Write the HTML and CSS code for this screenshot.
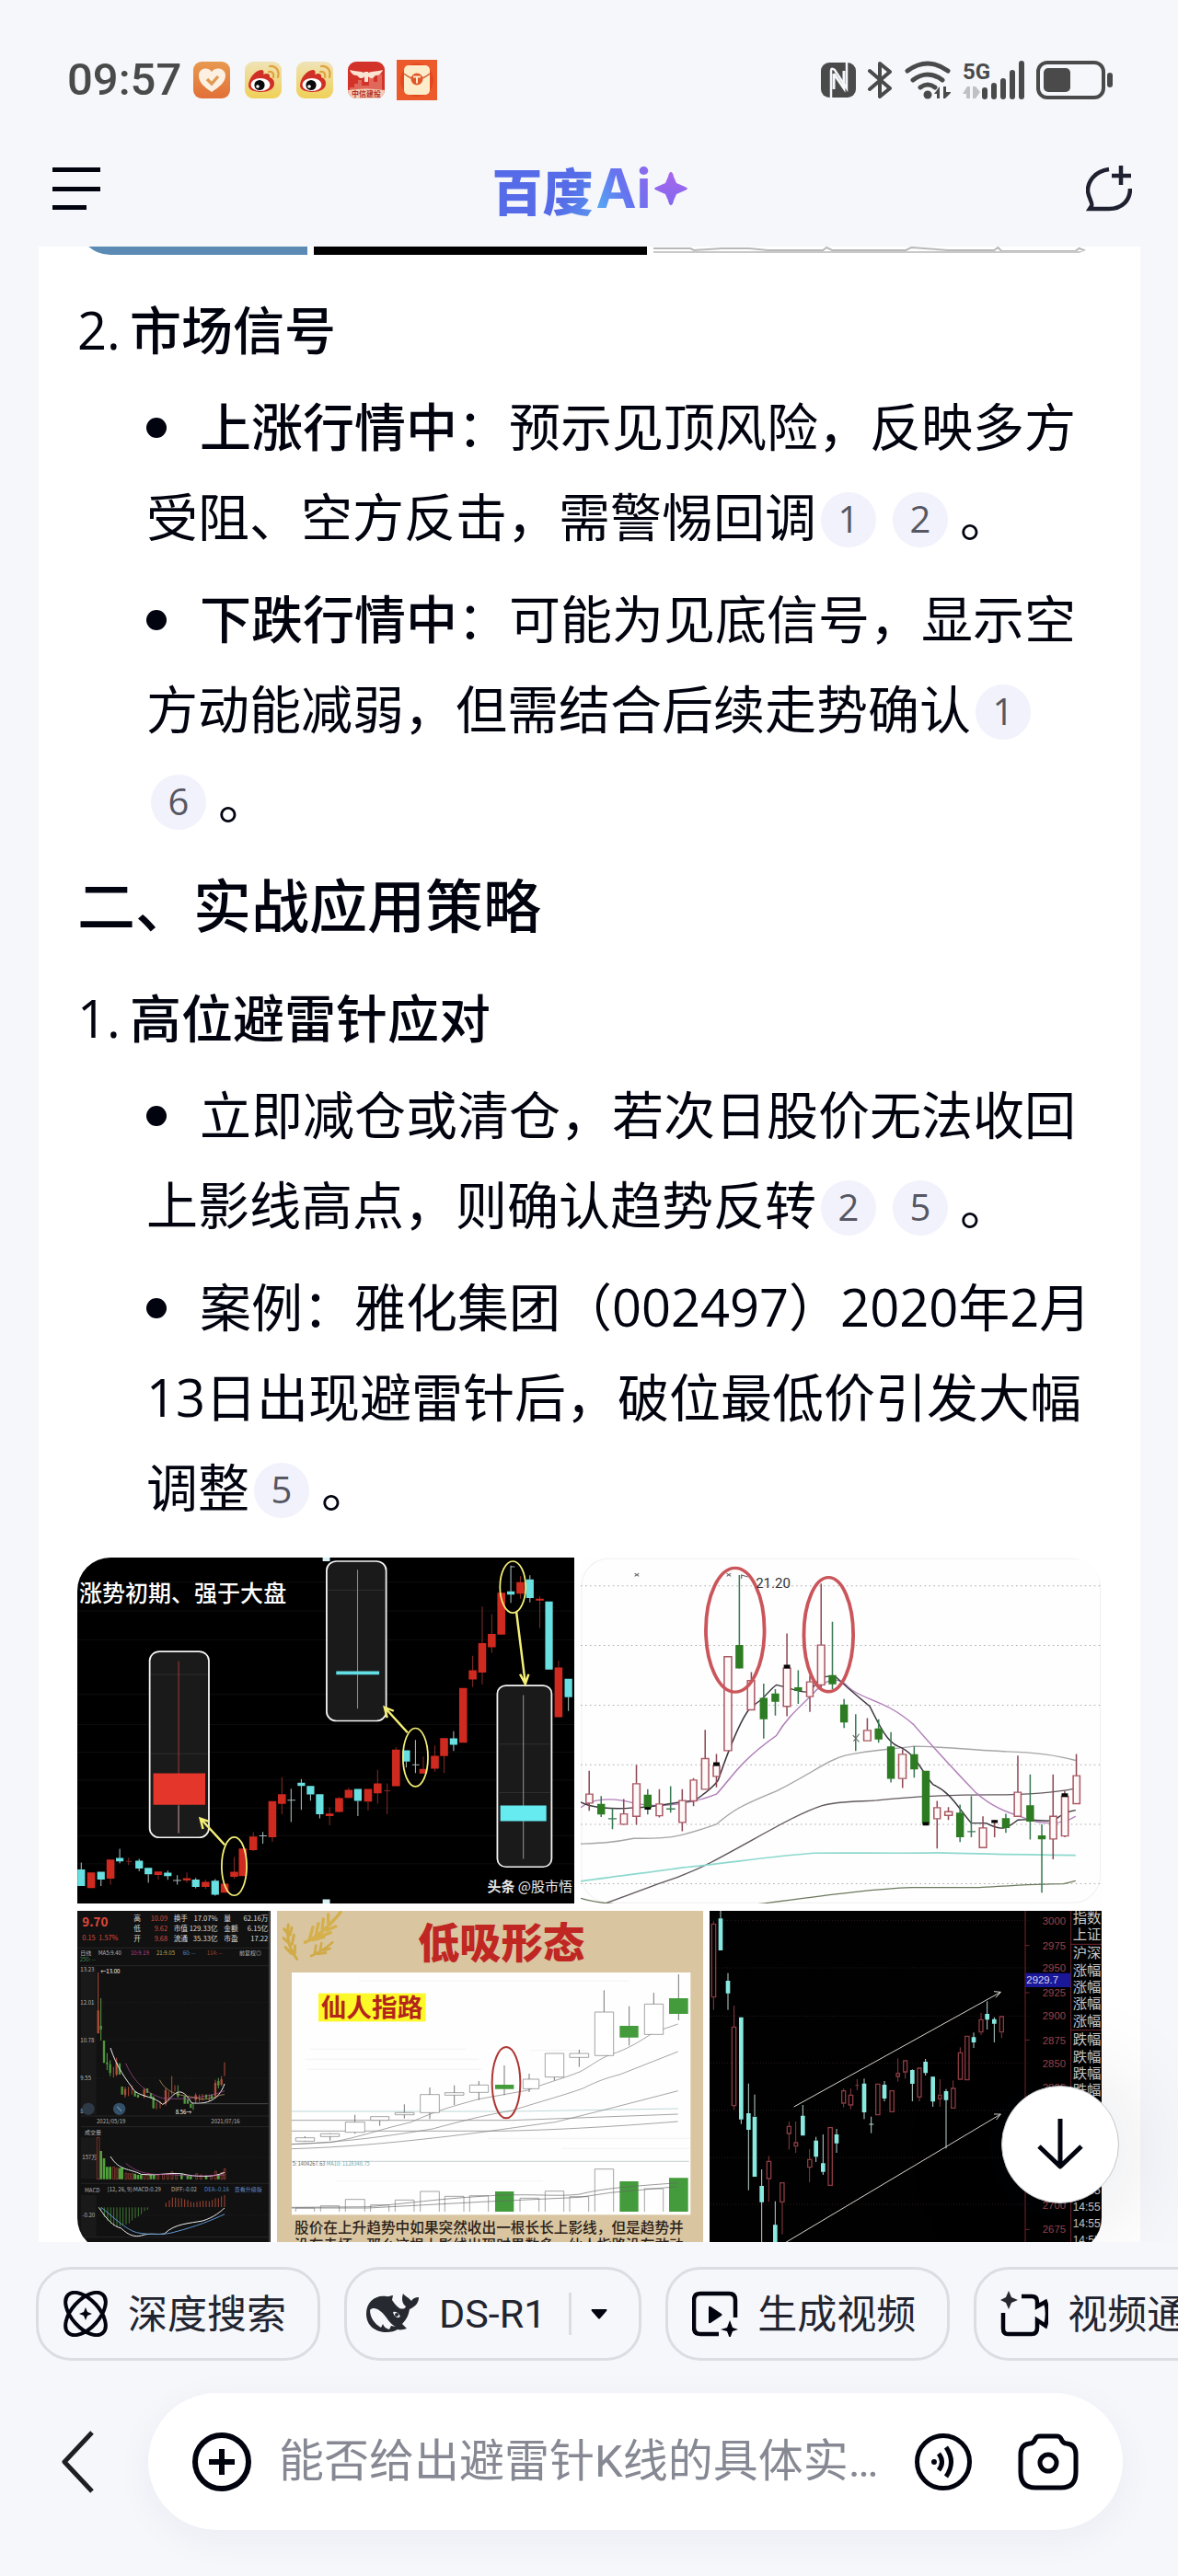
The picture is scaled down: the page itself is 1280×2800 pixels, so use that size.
FILE: index.html
```html
<!DOCTYPE html>
<html lang="zh-CN">
<head>
<meta charset="utf-8">
<meta name="viewport" content="width=device-width, initial-scale=1">
<title>百度Ai</title>
<link rel="stylesheet" href="styles.css">
</head>
<body>
<header class="top">
  <div class="status">
    <span class="clock">09:57</span>
    <svg class="app" viewBox="0 0 40 40"><defs><linearGradient id="or" x1="0" y1="0" x2="0" y2="1"><stop offset="0" stop-color="#e8994f"/><stop offset="1" stop-color="#e27038"/></linearGradient></defs><rect width="40" height="40" rx="9" fill="url(#or)"/><path d="M20 33C11 27 6 22 6 15c0-8 10-10 14-4 4-6 15-4 15 4 0 7-6 12-15 18z" fill="#fbf0e2"/><path d="M15 19l5 5 7-8" fill="none" stroke="#e29a52" stroke-width="3.4"/></svg>
    <svg class="app" viewBox="0 0 40 40"><defs><linearGradient id="ye" x1="0" y1="0" x2="0" y2="1"><stop offset="0" stop-color="#efe3b8"/><stop offset="1" stop-color="#efd056"/></linearGradient></defs><g id="weibo"><rect width="40" height="40" rx="9" fill="url(#ye)"/><path d="M4 26C4 18 12 9 18 9c3 0 3 3 2 5 4-2 8-1 7 3 3 1 5 3 5 7 0 6-7 9-14 9S4 31 4 26z" fill="#cf2f26"/><ellipse cx="17" cy="25" rx="10.500" ry="7" fill="#fff"/><circle cx="16" cy="25.500" r="5.600" fill="#0a0a0a"/><circle cx="14" cy="27" r="1.800" fill="#fff"/><path d="M26 11c4-1 6 2 5 6M27 5c7-1 11 5 9 12" fill="none" stroke="#e0a13f" stroke-width="2.200" stroke-linecap="round"/></g></svg>
    <svg class="app" viewBox="0 0 40 40"><use href="#weibo"/></svg>
    <svg class="app" viewBox="0 0 40 40"><defs><clipPath id="rc"><rect width="40" height="40" rx="9"/></clipPath></defs><g clip-path="url(#rc)"><rect width="40" height="40" fill="#d23227"/><path d="M2 28h5v-4h4v-4h4v6h8v-8h5v4h4v-8h5v18H2z" fill="#e0685a"/><path d="M2 9c6 2 11 1 16 3v-1h4v1c5-2 10-1 16-3-2 5-5 6-8 6l-3 3c-2 0-4 0-5-2v6h-4v-6c-1 2-3 2-5 2l-3-3c-3 0-6-1-8-6z" fill="#fbe3d2"/><path d="M0 31q20-3 40 0v9H0z" fill="#f4cdb8"/></g><text x="20" y="38" text-anchor="middle" class="tiny-label">中信建投</text></svg>
    <svg class="app app-wide" viewBox="0 0 44 44"><rect width="44" height="44" fill="#ec5a2c"/><circle cx="22" cy="22" r="18" fill="#e4481f"/><rect x="8" y="6" width="28" height="32" rx="5" fill="#fdecc9"/><path d="M8 15q14 12 28 0" fill="none" stroke="#cf5a33" stroke-width="1.500"/><circle cx="22" cy="21" r="6.500" fill="#e0572a"/><path d="M18 18.500h8M22 18.500v7" stroke="#fdecc9" stroke-width="2"/></svg>
    <span class="grow"></span>
    <svg width="38" height="38" viewBox="0 0 38 38"><rect width="38" height="38" rx="9" fill="#4a4a4a"/><path d="M11 38V9q0-4 4-1l13 20V0" fill="none" stroke="#f5f7fb" stroke-width="2.500"/><path d="M14 12v17M25 9v19L14 12" fill="none" stroke="#f5f7fb" stroke-width="3"/></svg>
    <svg width="27" height="42" viewBox="0 0 27 42"><path d="M2 11l22 19-11 9V3l11 9L2 31" fill="none" stroke="#4a4a4a" stroke-width="4" stroke-linejoin="round" stroke-linecap="round"/></svg>
    <svg width="50" height="42" viewBox="0 0 50 42"><path d="M3 11Q25-5 47 11M9 21q16-12 32 0M17 29q8-6 16 0" fill="none" stroke="#4a4a4a" stroke-width="5" stroke-linecap="round"/><circle cx="25" cy="37" r="4.500" fill="#4a4a4a"/><path d="M32 36l6-8v13h-3v-5zM42 28h3v6h6l-7 7h-2z" fill="#4a4a4a"/></svg>
    <svg width="67" height="42" viewBox="0 0 67 42"><text x="0" y="20" class="net-label">5G</text><path d="M0 36l5-8h3v13H4v-5zM11 28h3l5 6-5 7h-3z" fill="#bfc0c3"/><path d="M24 32v7M34 27v12M44 22v17M54 13v26M64 3v36" stroke="#4a4a4a" stroke-width="6" stroke-linecap="round"/></svg>
    <svg width="83" height="42" viewBox="0 0 83 42"><rect x="2" y="2" width="71" height="38" rx="10" fill="none" stroke="#4a4a4a" stroke-width="4"/><rect x="8" y="8" width="29" height="26" rx="5" fill="#4a4a4a"/><rect x="77" y="13" width="6" height="16" rx="3" fill="#4a4a4a"/></svg>
  </div>
  <nav class="nav">
    <button class="icon-btn" aria-label="菜单"><svg width="52" height="46" viewBox="0 0 52 46"><path d="M0 2.500h52M0 23.500h52M0 43.500h37" stroke="#01030f" stroke-width="5"/></svg></button>
    <a class="logo" href="#"><span class="logo-cn">百度</span><span class="logo-ai">Ai</span><svg width="36" height="36" viewBox="0 0 36 36"><defs><linearGradient id="st" x1="0" y1="0" x2="0" y2="1"><stop offset="0" stop-color="#a967ec"/><stop offset="1" stop-color="#8168ee"/></linearGradient></defs><path d="M18 0q2 0 3 5l3 7 7 3q5 2 5 3t-5 3l-7 3-3 7q-1 5-3 5t-3-5l-3-7-7-3q-5-2-5-3t5-3l7-3 3-7q1-5 3-5z" fill="url(#st)"/></svg></a>
    <button class="icon-btn" aria-label="新对话"><svg width="50" height="50" viewBox="0 0 50 50"><path d="M25 4C9 6 2 18 2 27c0 7 6 14 4 17l-2 3h21c14 0 23-9 23-22M38 0v21M28 11h21" fill="none" stroke="#1f2130" stroke-width="4.500"/></svg></button>
  </nav>
</header>

<div class="stage">
<main class="card">
  <div class="strip">
    <div class="strip-blue"></div>
    <div class="strip-black"></div>
    <svg class="strip-chart" viewBox="0 0 487 60" preserveAspectRatio="none"><rect width="487" height="60" fill="#fff"/><path d="M0 53h40l4 2 30-2h30l20 2h60l4-3 6 3h80l6-3 40 3h50l4-3 4 4h80l4-3 8 3h20" fill="none" stroke="#b9b9b9" stroke-width="2"/><path d="M0 57h487" stroke="#c9c9c9" stroke-width="2"/></svg>
  </div>

  <h3 class="sub"><span class="num">2.</span>市场信号</h3>
  <ul class="points">
    <li><b>上涨行情中</b>：预示见顶风险，反映多方受阻、空方反击，需警惕回调<a class="ref" href="#">1</a><a class="ref" href="#">2</a>。</li>
    <li><b>下跌行情中</b>：可能为见底信号，显示空方动能减弱，但需结合后续走势确认<a class="ref" href="#">1</a><a class="ref" href="#">6</a>。</li>
  </ul>
  <h2 class="section">二、实战应用策略</h2>
  <h3 class="sub"><span class="num">1.</span>高位避雷针应对</h3>
  <ul class="points">
    <li>立即减仓或清仓，若次日股价无法收回上影线高点，则确认趋势反转<a class="ref" href="#">2</a><a class="ref" href="#">5</a>。</li>
    <li>案例：雅化集团（002497）2020年2月13日出现避雷针后，破位最低价引发大幅调整<a class="ref" href="#">5</a>。</li>
  </ul>

  <div class="gallery">
    <div class="row row-a">
      <svg class="shot" viewBox="0 0 540 376">
        <rect width="540" height="376" fill="#000"/>
        <g transform="scale(.3571 .3333) translate(-12 -40)" fill="none">
          <path d="M12 120H1522M12 214H1522M12 308H1522M12 486H1522M12 584H1522M12 674H1522M12 765H1522M12 856H1522M12 946H1522M12 1038H1522" stroke="#151515" stroke-width="2"/>
          <g fill="#1b1a1b" stroke="#f4f4f4" stroke-width="5"><rect x="232" y="346" width="180" height="606" rx="30"/><rect x="770" y="52" width="181" height="520" rx="30"/><rect x="1289" y="457" width="165" height="591" rx="26"/></g>
          <path d="M236 421H408M236 679H408M774 146H948M1292 648H1450M1292 806H1450" stroke="#3a3a39" stroke-width="2"/>
          <path d="M320 378V938" stroke="#963b35" stroke-width="3"/><path d="M320 848V938M864 80V532M1368 488V1022" stroke="#8c8c8c" stroke-width="3"/>
          <path d="M243 743H401V846H243z" fill="#e4362b"/><path d="M799 416H930" stroke="#62dfe6" stroke-width="11"/><path d="M1298 848H1438V899H1298z" fill="#66ebf1"/>
          <path d="M24 1034V1056M84 1089V1110M141 989V1036M200 1022V1062M228 1072V1100M287 1060V1090M316 1075V1106M303 1092H328M372 1084V1118M431 1088V1142M576 934V972M565 947H588M662 793V902M651 831H675M693 762V862M721 812V832M749 876V890M865 833V882M1012 705V724M1040 634V742M1030 715H1052M1156 606V670M1330 66V188M1330 70H1342M1388 98V186M1505 495V540" stroke="#a5b9bb" stroke-width="3"/>
          <path d="M113 1086V1106M168 1018V1042M160 1030H178M258 1074V1090M345 1066V1100M402 1090V1120M489 1016V1086M547 934V996M605 951V966M634 756V876M779 854V912M808 820V870M837 790V824M896 835V864M925 732V842M954 776V876M945 800H964M981 658V666M1064 688V745M1099 652V738M1127 687V742M1214 360V462M1243 200V454M1272 224V350M1359 100V174M1418 166V270M1475 376V560" stroke="#7d2a26" stroke-width="3"/>
          <path d="M54 1066V1117M113 1024V1086M258 1063V1074M345 1085V1092M402 1097V1113M460 1103V1132M489 1064V1080M515 988V1078M547 949V993M605 834V951M634 811V843M779 874V882M808 824V869M837 797V823M896 794V835M925 776V808M981 666V785M1064 729V744M1099 686V728M1127 628V687M1185 465V643M1214 407V437M1243 319V415M1272 289V332M1301 155V291M1359 120V158M1418 174V180M1475 398V560" stroke="#cf2a20" stroke-width="24"/>
          <path d="M24 1056V1110M84 1064V1089M141 1019V1030M200 1028V1053M228 1051V1072M287 1067V1078M372 1089V1113M431 1093V1139M693 774V784M721 784V812M749 811V876M865 794V833M1012 668V705M1156 629V650M1330 150V161M1388 111V172M1446 183V405M1505 435V495" stroke="#68dfe0" stroke-width="23"/>
          <g stroke="#f3ee76" stroke-width="5"><ellipse cx="489" cy="1046" rx="38" ry="95"/><ellipse cx="1040" cy="691" rx="38" ry="95"/><ellipse cx="1336" cy="136" rx="39" ry="84"/><path d="M460 976L388 892M412 900L386 890L394 924M1016 610L948 530M974 540L946 528L954 562M1347 218L1374 450M1358 420L1374 452L1384 420" stroke-width="7"/></g>
          <path d="M758 32H780V52H758zM758 1154H780V1172H758z" fill="#d9f1f4"/>
        </g>
        <text x="2" y="48" class="shot-title">涨势初期、强于大盘</text>
        <text x="445" y="363" class="shot-mark"><tspan class="strong">头条</tspan> @股市悟</text>
      </svg>
      <svg class="shot" viewBox="0 0 565 376">
        <rect width="565" height="376" fill="#fefefe"/>
        <rect x="1" y="1" width="563" height="374" rx="30" fill="none" stroke="#f0f0ef"/>
        <g transform="scale(.3827 .3333) translate(-30 -35)" fill="none">
          <path d="M30 127H1505M30 321H1505M30 516H1505M30 710H1505M30 904H1505M30 1098H1505" stroke="#a9a9a9" stroke-width="3" stroke-dasharray="4 9"/>
          <path d="M30 968C90 965 120 964 180 950C280 950 300 950 415 904C460 860 480 845 585 796C690 735 730 695 780 680C860 660 900 662 975 650C1080 652 1170 665 1240 667C1330 670 1400 685 1434 696" stroke="#a8a5a8" stroke-width="4"/>
          <path d="M80 1170C150 1140 200 1120 250 1098C330 1070 370 1045 400 1028C530 950 640 870 715 843C760 828 830 830 870 826C980 812 1100 808 1200 808C1310 808 1380 800 1434 787" stroke="#62595f" stroke-width="4"/>
          <path d="M30 1090C120 1075 230 1060 320 1045C450 1030 560 1010 690 998C820 996 900 1000 1040 997C1180 1000 1250 1004 1434 1005" stroke="#8ed9cf" stroke-width="5"/>
          <path d="M30 1145Q90 1165 200 1170M490 1170C640 1150 830 1115 970 1110H1160C1240 1105 1320 1098 1400 1098L1434 1088" stroke="#6b7a5d" stroke-width="4"/>
          <path d="M30 850C60 820 120 815 180 835C260 855 350 835 415 806C460 750 480 700 585 615C620 545 670 505 700 465C730 430 760 420 790 458C830 500 890 495 975 580C1050 680 1100 740 1150 800C1200 850 1240 865 1280 880C1330 905 1390 910 1434 878" stroke="#b07fb8" stroke-width="4"/>
          <path d="M30 832C60 850 120 857 180 850C260 848 320 825 350 828C390 800 415 770 420 760C450 660 490 540 520 515C550 500 560 470 585 450C630 462 660 480 685 470C700 425 730 415 755 425C800 475 820 490 850 520C880 590 900 635 930 650C980 670 1000 740 1030 775C1080 800 1100 850 1138 900H1180C1230 930 1240 915 1270 890C1320 885 1350 900 1375 890C1400 865 1420 860 1434 858" stroke="#3e3740" stroke-width="4"/>
          <path d="M54 730V860M152 822V906M188 710V906M253 790V882M318 790V927M350 754V845M383 596V790M415 675V784M514 408V530M615 282V552M680 420V538M712 120V460M843 558V632M943 660V786M1041 828V983M1073 848V890M1171 878V980M1204 890V946M1270 680V880M1370 742V1018M1403 795V946M1436 675V838" stroke="#8d4954" stroke-width="4"/>
          <g fill="#fff9f9" stroke="#aa5963" stroke-width="4"><path d="M45 806h19v29h-19zM143 870h19v34h-19zM178 772h20v106h-20zM244 838h18v38h-18zM309 827h19v71h-19zM341 760h18v68h-18zM373 690h20v100h-20zM406 712h18v36h-18zM437 358h21v306h-21zM503 436h20v95h-20zM605 395h20v125h-20zM671 440h18v48h-18zM702 320h20v130h-20zM833 598h20v34h-20zM932 676h21v79h-21zM1032 850h18v36h-18zM1063 863h21v12h-21zM1161 916h20v64h-20zM1260 800h19v78h-19zM1361 878h19v74h-19zM1394 813h19v129h-19zM1427 746h19v91h-19z"/></g>
          <path d="M88 812V880M120 852V920M108 886H132M220 790V872M285 780V866M273 854H298M480 92V396M549 446V625M582 464V550M647 402V512M744 244V464M777 496V590M810 545V665M875 562V638M910 604V768M976 650V752M1106 840V962M1138 812V946M1127 928H1150M1236 870V932M1305 742V954M1338 904V1127" stroke="#3a7a55" stroke-width="4"/>
          <path d="M88 838V872M220 808V850M480 320V396M549 492V562M582 478V505M647 458V470M744 418V448M777 514V572M875 592V628M910 650V756M976 676V725M1009 730V902M1106 866V946M1236 884V916M1305 842V895M1338 940V953" stroke="#2d7b22" stroke-width="22"/>
          <path d="M415 702V714M615 384V396M1009 897V908M1204 890V900M1403 803V815M220 848V856" stroke="#080808" stroke-width="18"/>
          <path d="M802 614L820 636M820 610L804 634M183 86l12 10m0-10l-12 10M444 86l12 10m0-10l-12 10M486 104V92L504 98" stroke="#666" stroke-width="3"/>
          <ellipse cx="468" cy="271" rx="83" ry="202" stroke="#ca565b" stroke-width="10"/><ellipse cx="733" cy="286" rx="70" ry="186" stroke="#ca565b" stroke-width="10"/>
        </g>
        <text x="190" y="33" class="shot-price">21.20</text>
      </svg>
    </div>
    <div class="row row-b">
      <svg class="shot" viewBox="12 51 630 1110">
        <rect x="12" y="51" width="630" height="1110" fill="#111"/>
        <path d="M12 172H640M24 230H636M24 720H636M24 755H636M24 940H636M24 1115H636" stroke="#262626" stroke-width="3"/>
        <path d="M24 350H636M24 473H636M24 597H636M80 855H636M80 1044H636" stroke="#2a2a2a" stroke-width="2" stroke-dasharray="3 5"/>
        <path d="M24 235H74V715H24zM24 790H74V925H24zM24 978H74V1112H24z" fill="#191919"/>
        <path d="M638 51V1161" stroke="#4a4a4a" stroke-width="4"/>
        <g class="quote">
          <text x="28" y="103" class="q-big">9.70</text>
          <g class="q-red"><text x="28" y="148">0.15</text><text x="82" y="148">1.57%</text></g>
          <g class="q-row"><text x="196" y="85">高</text><text x="196" y="118">低</text><text x="196" y="151">开</text><text x="326" y="85">换手</text><text x="326" y="118">市值</text><text x="326" y="151">流通</text><text x="490" y="85">量</text><text x="490" y="118">金额</text><text x="490" y="151">市盈</text></g>
          <g class="q-row end"><g class="q-red"><text x="306" y="83">10.09</text><text x="306" y="116">9.62</text><text x="306" y="149">9.68</text></g><text x="470" y="83">17.07%</text><text x="470" y="116">129.33亿</text><text x="470" y="149">35.33亿</text><text x="634" y="83">62.16万</text><text x="634" y="116">6.15亿</text><text x="634" y="149">17.22</text></g>
          <text x="22" y="195">日线</text><text x="80" y="195">MA5:9.40</text><text x="186" y="195" fill="#b0428c">10:9.19</text><text x="270" y="195" fill="#c4a24c">21:9.05</text><text x="356" y="195" fill="#5a86bb">60: --</text><text x="434" y="195" fill="#a3442f">114: --</text><text x="540" y="195">前复权◎</text><text x="20" y="216" fill="#3d8555">250: --</text>
          <text x="22" y="250">13.23</text><text x="88" y="256" fill="#fff">←13.00</text><text x="22" y="356">12.01</text><text x="22" y="479">10.78</text><text x="22" y="603">9.55</text><text x="22" y="710">8.32</text><text x="332" y="713" fill="#fff">8.56→</text><text x="75" y="743">2021/05/19</text><text x="448" y="743">2021/07/16</text>
          <text x="36" y="781">成交量</text><text x="28" y="862">157万</text><text x="36" y="968">MACD</text><text x="110" y="966">[12, 26, 9]:MACD:0.29</text><text x="318" y="966">DIFF:-0.02</text><text x="426" y="966" fill="#5a86bb">DEA:-0.16</text><text x="524" y="967" fill="#5f86c2">查看升级版</text><text x="28" y="1050">-0.20</text>
        </g>
        <g fill="none">
          <path d="M80 252V452M130 560V594M140 530V590M168 625V660M179 625V655M190 620V650M230 628V662M270 675V698M282 672V695M300 628V686M310 640V672M320 590V650M330 620V640M398 646V680M410 650V674M420 648V670M442 650V672M462 602V660M482 590V622M492 545V590" stroke="#b14c38" stroke-width="3"/>
          <path d="M80 376V450M140 545V585M168 632V652M230 634V656M300 636V680M398 652V668M462 612V654M482 600V618" stroke="#b14c38" stroke-width="7"/>
          <path d="M89 336V474M109 515V570M119 538V590M340 620V660M390 676V700M472 596V630" stroke="#5b9a4a" stroke-width="3"/>
          <path d="M89 426V438M99 474V547M109 545V551M119 551V580M150 548V585M158 624V650M200 640V656M210 650V660M240 630V645M252 645V660M260 656V695M340 646V656M362 655V680M372 665V680M382 680V694M432 650V662M450 650V664M472 606V620" stroke="#4f963c" stroke-width="7"/>
          <path d="M120 498C140 560 170 600 200 640C230 660 260 655 290 682C320 670 340 600 385 678C420 680 470 680 492 615" stroke="#eee" stroke-width="3"/>
          <path d="M170 548C200 620 250 650 290 662C350 668 440 660 492 638" stroke="#b0509e" stroke-width="2"/><path d="M280 602C310 660 370 650 410 664C450 670 470 650 492 650" stroke="#d1b16c" stroke-width="2"/><path d="M390 680H634" stroke="#666" stroke-width="2"/>
          <circle cx="48" cy="697" r="20" fill="#2e3946"/><circle cx="149" cy="697" r="20" fill="#345069"/><path d="M142 690l14 14" stroke="#9ab8d4" stroke-width="3"/>
          <path d="M89 834V926M99 858V926M109 886V926M119 886V926M150 890V926M158 888V926M200 908V926M210 912V926M220 912V926M252 912V926M262 912V926M352 910V926M372 914V926M382 916V926M432 914V926M472 910V926" stroke="#51a23c" stroke-width="8"/>
          <path d="M76 790H84V926H76zM128 886H134V926H128zM138 890H144V926H138zM168 906H174V926H168zM178 908H184V926H178zM188 908H194V926H188zM228 910H234V926H228zM240 908H246V926H240zM272 912H278V926H272zM290 910H296V926H290zM304 908H310V926H304zM318 902H324V926H318zM332 908H338V926H332zM398 908H404V926H398zM412 912H418V926H412zM446 914H452V926H446zM460 900H466V926H460zM480 904H486V926H480zM490 892H495V926H490z" stroke="#b14c38" stroke-width="2"/>
          <path d="M120 852C150 900 180 890 220 910C280 916 330 900 370 912C420 920 460 918 492 904" stroke="#eee" stroke-width="3"/><path d="M170 874C210 910 260 912 310 910C370 918 430 915 492 912" stroke="#b0509e" stroke-width="2"/>
          <path d="M90 1018V1026M100 1018V1050M111 1018V1062M121 1018V1070M131 1018V1078M141 1018V1080M151 1018V1080M161 1018V1078M171 1018V1074M181 1018V1070M191 1018V1060M201 1018V1053M211 1018V1048M221 1018V1040M231 1018V1030M241 1018V1026" stroke="#3f7a33" stroke-width="3"/>
          <path d="M301 1003V1017M312 995V1017M322 986V1017M332 986V1017M342 988V1017M352 988V1017M362 992V1017M372 994V1017M382 1000V1017M392 1002V1017M402 1000V1017M412 998V1017M422 996V1017M432 996V1017M442 998V1017M452 994V1017M462 988V1017M472 988V1017M482 982V1017M492 978V1017" stroke="#a34735" stroke-width="3"/>
          <path d="M82 1018C110 1060 130 1080 155 1086C180 1110 200 1115 220 1110C250 1100 270 1108 296 1104C330 1070 380 1070 420 1062C460 1050 480 1030 492 1020" stroke="#eee" stroke-width="3"/><path d="M90 1018C130 1050 170 1090 205 1100C250 1108 300 1108 330 1098C400 1080 450 1060 492 1040" stroke="#5f96d2" stroke-width="3"/>
        </g>
      </svg>
      <svg class="shot" viewBox="33 51 1389 1110">
        <rect x="33" y="51" width="1389" height="1110" fill="#d9c5a0"/>
        <path d="M98 208Q60 160 70 96M80 190l-20-20M90 195l2-30M76 160l-22-20M82 160l6-30M72 130l-16-20M75 130l6-24" fill="none" stroke="#d0ab48" stroke-width="9" stroke-linecap="round"/>
        <path d="M124 154Q180 130 240 56M140 140l10-36M160 128l8-36M180 112l4-34M200 92l0-30M150 146l36-10M172 134l36-12M196 114l28-12" fill="none" stroke="#d5b04b" stroke-width="10" stroke-linecap="round"/>
        <path d="M144 198Q180 184 214 154M156 188l4-24M174 178l4-22M166 192l26-4M186 180l20-6" fill="none" stroke="#d0ab48" stroke-width="8" stroke-linecap="round"/>
        <text x="492" y="208" class="poster-title">低吸形态</text>
        <rect x="81" y="252" width="1300" height="790" fill="#fefefe"/>
        <path d="M140 502H650M125 535H690M130 568H700M300 280H1180M860 506H1040M720 793H1380M960 826H1380M225 932H900" stroke="#ededed" stroke-width="2"/>
        <rect x="168" y="320" width="350" height="92" fill="#fdf827"/>
        <text x="176" y="397" class="poster-tag">仙人指路</text>
        <g fill="none" stroke="#777" stroke-width="2">
          <path d="M81 705H800L1340 696" stroke="#9fc4c4"/><path d="M81 734H800L1340 714"/><path d="M81 769H760Q1000 765 1340 738"/><path d="M81 868H1376" stroke="#a9b9b9"/>
          <path d="M81 812L210 806C300 790 380 760 470 740C560 700 600 690 690 665L850 636C900 615 960 600 1020 576C1060 555 1080 535 1120 520C1180 500 1210 480 1260 448L1340 420"/>
          <path d="M81 812C250 806 400 785 540 762C640 735 720 715 800 702C900 670 960 655 1030 630C1080 605 1110 595 1150 585L1340 510"/>
          <path d="M81 827C250 822 400 808 540 792C700 775 840 752 940 740L1100 700L1340 638"/>
          <path d="M124 786V804M206 776V800M287 716V778M368 734V752M448 682V728M531 627V730M611 620V684M691 606V668M774 555V652M855 582V642M937 592V604M1018 504V560M1099 310V382M1181 362V490M1261 318V356M1342 258V408" stroke-width="3"/>
          <path d="M94 791H155V802H94zM175 778H236V787H175zM256 740H319V773H256zM338 722H398V734H338zM418 709H480V716H418zM500 650H562V709H500zM580 644H642V652H580zM661 619H722V643H661zM835 600H887V631H835zM907 516H968V593H907zM987 516H1049V529H987zM1069 381H1130V523H1069zM1231 355H1292V454H1231z" fill="#fff"/>
          <path d="M94 1032V1020H155V1032M175 1032V1013H236V1032M256 1032V992H319V1032M338 1032V1010H398V1032M418 1032V994H480V1032M500 1032V966H562V1032M580 1032V982H642V1032M661 1032V980H722V1032M825 1032V988H887V1032M907 1032V965H968V1032M987 1032V983H1049V1032M1069 1032V893H1130V1032M1231 1032V957H1292V1032"/>
        </g>
        <path d="M744 618H805V632H744zM1150 426H1211V464H1150zM1311 336H1373V387H1311zM744 966H805V1032H744zM1150 933H1211V1032H1150zM1311 922H1373V1032H1311z" fill="#439b3b"/>
        <path d="M81 1018L330 1016C460 1005 560 990 700 982C850 970 940 985 1020 975C1100 955 1180 950 1340 938M81 1020L330 1020L700 1000L1020 985L1120 970L1340 950" fill="none" stroke="#666" stroke-width="2"/>
        <ellipse cx="780" cy="611" rx="46" ry="116" fill="none" stroke="#ae3532" stroke-width="6"/>
        <text x="83" y="883" class="poster-small">5: 1404267.63 <tspan fill="#67a9b0">MA10: 1128348.75</tspan></text>
        <text x="90" y="1102" class="poster-body">股价在上升趋势中如果突然收出一根长长上影线，但是趋势并</text>
        <text x="90" y="1158" class="poster-body">没有走坏，那么这根上影线出现时果数多，仙人指路没有敢动</text>
      </svg>
      <svg class="shot" viewBox="33 51 1278 1110">
        <rect x="33" y="51" width="1278" height="1110" fill="#010101"/>
        <path d="M36 83H1080M36 237H1080M36 394H1080M36 547H1080M36 702H1080M36 856H1080M36 1008H1080" stroke="#3c2428" stroke-width="2" stroke-dasharray="3 6"/>
        <path d="M1062 51V1161M1211 51V1161M1211 160H1311M1211 440H1311M1062 164h14M1062 318h14M1062 472h14M1062 1090h14" stroke="#74262d" stroke-width="3"/>
        <g fill="none">
          <path d="M46 85V92M46 334V374M113 360V430M113 686V700M226 850V868M226 926V1000M270 1000V1106M292 738V754M292 777V830M314 738V806M314 820V840M359 828V862M359 888V936M470 630V640M470 680V692M493 630V652M493 686V698M514 600V636M508 620H520M647 532V580M647 592V608M671 576V598M717 656V672M784 600V650M784 664V690M827 604V630M850 496V514M918 384V406M918 448V456M985 448V466" stroke="#8b3b42" stroke-width="3"/>
          <path d="M40 94H53V332H40zM106 430H119V686H106zM220 868H233V924H220zM263 938H276V1000H263zM286 754H298V777H286zM309 807H320V818H309zM353 862H366V887H353zM420 758H433V946H420zM464 638H476V678H464zM487 652H500V684H487zM575 616H588V716H575zM621 638H634V706H621zM642 581H652V591H642zM665 540H677V576H665zM711 564H723V658H711zM779 652H789V664H779zM821 630H834V694H821zM844 514H857V600H844zM866 460H879V602H866zM912 406H924V446H912zM979 396H991V446H979z" stroke="#8b3b42" stroke-width="4"/>
          <path d="M69 51V76M93 254V374M136 730V746M160 614V962M180 650V720M203 894V1161M247 998V1161M337 684V720M380 788V870M403 780V912M447 762V840M537 598V730M560 722V776M553 747H568M603 606V672M694 568V672M737 534V588M761 592V690M804 632V826M894 448V498M938 346V438M961 398V480" stroke="#b9d6d2" stroke-width="3"/>
          <path d="M69 76V180M93 279V320M136 398V731M160 711V765M180 722V918M203 948V1001M247 1075V1161M337 719V784M380 800V853M403 874V902M447 780V809M537 614V708M603 618V663M694 570V615M737 543V580M761 592V673M804 639V668M894 463V480M938 387V406M961 404V419" stroke="#87e9df" stroke-width="14"/>
          <path d="M308 690L982 316M960 314L982 316L966 334M280 1133L982 714M960 714L982 714L968 732" stroke="#d9d6cd" stroke-width="3"/>
        </g>
        <rect x="1062" y="254" width="148" height="46" fill="#1a1798"/><text x="1066" y="288" class="scale-now">2929.7</text>
        <g class="scale"><text x="1194" y="95">3000</text><text x="1194" y="176">2975</text><text x="1194" y="249">2950</text><text x="1194" y="331">2925</text><text x="1194" y="404">2900</text><text x="1194" y="486">2875</text><text x="1194" y="560">2850</text><text x="1194" y="640">2825</text><text x="1194" y="1022">2700</text><text x="1194" y="1101">2675</text></g>
        <g class="side"><text x="1217" y="89">指数</text><text x="1217" y="143">上证</text><text x="1217" y="204">沪深</text><text x="1217" y="260">涨幅</text><text x="1217" y="315">涨幅</text><text x="1217" y="370">涨幅</text><text x="1217" y="425">涨幅</text><text x="1217" y="487">跌幅</text><text x="1217" y="542">跌幅</text><text x="1217" y="597">跌幅</text><text x="1217" y="651">跌幅</text></g>
        <g class="times"><text x="1217" y="976">14:55</text><text x="1217" y="1030">14:55</text><text x="1217" y="1083">14:55</text><text x="1217" y="1136">14:55</text></g>
      </svg>
    </div>
  </div>
</main>
<button class="to-bottom" aria-label="回到底部"><svg width="50" height="56" viewBox="0 0 50 56"><path d="M25 0V52M2 30L25 52L48 30" fill="none" stroke="#01030f" stroke-width="5" stroke-linejoin="round"/></svg></button>
</div>

<footer class="bottom">
  <div class="tools">
    <button class="tool"><svg width="50" height="50" viewBox="0 0 50 50"><g fill="none" stroke="#01030f" stroke-width="4"><ellipse cx="25" cy="25" rx="28" ry="15" transform="rotate(48 25 25)"/><ellipse cx="25" cy="25" rx="28" ry="15" transform="rotate(132 25 25)"/></g><path d="M25 18l2 5 5 2-5 2-2 5-2-5-5-2 5-2z" fill="#01030f"/></svg>深度搜索</button>
    <button class="tool tool-split"><svg width="58" height="44" viewBox="0 0 58 44"><path d="M22 3C10 1 0 9 0 22c0 13 10 20 22 20 5 0 9-1 12-3 3 1 7 0 10-1l-5-5c5-5 7-10 8-16 5-2 10-6 10-13-4 0-6 1-8 4-3-4-7-5-9-8-2 6-1 11 3 14-1 3-4 3-7 2-4-3-6-6-8-9l1-5c-3 0-5 2-7 1z" fill="#272930"/><path d="M4 18c4-5 12 0 17 7 4 6 7 9 11 11l-5-1-2 4c-4-1-6-3-7-6l-2 4C9 33 4 26 4 18z" fill="#f5f7fb"/><path d="M29 20q5-1 8 5-4 3-7-2z" fill="#f5f7fb"/><circle cx="33" cy="23" r="2" fill="#272930"/></svg>DS-R1<span class="divider"></span><svg width="18" height="11" viewBox="0 0 18 11"><path d="M1 0h16q1 1 0 2l-7 8q-1 1-2 0L1 2q-1-1 0-2z" fill="#01030f"/></svg></button>
    <button class="tool"><svg width="50" height="50" viewBox="0 0 50 50"><path d="M47 29V10q0-7-7-7H9q-7 0-7 7v30q0 7 7 7h20" fill="none" stroke="#01030f" stroke-width="4.500"/><path d="M18 18q0-2 2-1l12 8q1 1 0 2l-12 8q-2 1-2-1zM41 32l3 8 6 2-6 2-3 8-3-8-7-2 7-2z" fill="#01030f"/></svg>生成视频</button>
    <button class="tool"><svg width="52" height="50" viewBox="0 0 52 50"><path d="M23 6h11q6 0 6 6v5l9-5q2 6 2 13t-2 13l-9-6v8q0 7-6 7H8q-5 0-5-6V24" fill="none" stroke="#01030f" stroke-width="4.500"/><path d="M9 0l3 7 7 3-7 3-3 7-3-7-6-3 6-3z" fill="#272930"/></svg>视频通话</button>
  </div>
  <form class="ask">
    <button class="icon-btn" type="button" aria-label="返回"><svg width="36" height="68" viewBox="0 0 36 68"><path d="M33 2L3 34l30 32" fill="none" stroke="#1d1f22" stroke-width="5" stroke-linejoin="round"/></svg></button>
    <div class="field">
      <button class="icon-btn" type="button" aria-label="添加"><svg width="64" height="64" viewBox="0 0 64 64"><circle cx="32" cy="32" r="29" fill="none" stroke="#01030f" stroke-width="6"/><path d="M32 18v28M18 32h28" stroke="#01030f" stroke-width="6"/></svg></button>
      <input class="query" type="text" aria-label="提问" placeholder="能否给出避雷针K线的具体实…">
      <button class="icon-btn" type="button" aria-label="语音"><svg width="62" height="62" viewBox="0 0 62 62"><circle cx="31" cy="31" r="28.500" fill="none" stroke="#01030f" stroke-width="5"/><circle cx="21" cy="31" r="3" fill="#01030f"/><path d="M26 22q7 9 0 18M34 15q11 16 0 32" fill="none" stroke="#01030f" stroke-width="5"/></svg></button>
      <button class="icon-btn" type="button" aria-label="拍照"><svg width="66" height="62" viewBox="0 0 66 62"><path d="M13 11q4 0 6-5 1-3 5-3h18q4 0 5 3 2 5 6 5 10 1 10 12v19q0 17-16 17H19Q3 59 3 42V23q0-11 10-12z" fill="none" stroke="#01030f" stroke-width="5"/><circle cx="33" cy="32" r="9" fill="none" stroke="#01030f" stroke-width="5"/></svg></button>
    </div>
  </form>
</footer>
</body>
</html>
```
FILE: styles.css
```css
* { box-sizing: border-box; }

body {
  margin: 0;
  height: 100vh;
  display: flex;
  flex-direction: column;
  overflow: hidden;
  background: #f5f7fb;
  color: #01030f;
  font-family: "Noto Sans CJK SC", "Noto Sans", sans-serif;
}

svg { display: block; flex: none; }
button { font: inherit; color: inherit; border: 0; background: none; padding: 0; }
a { color: inherit; text-decoration: none; }
.icon-btn { flex: none; }
.grow { flex: 1; }

/* Status bar and navigation */
.status {
  display: flex;
  align-items: center;
  gap: 13px;
  height: 50px;
  margin-top: 62px;
  padding: 0 71px 0 73px;
}
.clock { font: 500 49px/50px Roboto, sans-serif; color: #4a4a4a; }
.app { width: 40px; height: 40px; margin-right: 3px; }
.app-wide { width: 44px; height: 44px; margin: 0 0 0 -3px; }
.tiny-label { font-size: 8px; font-weight: 700; fill: #b3302a; }
.net-label { font: 700 24px Roboto, sans-serif; fill: #4a4a4a; }

.nav {
  display: flex;
  align-items: center;
  justify-content: space-between;
  height: 126px;
  margin-top: 30px;
  padding: 0 50px 0 57px;
}
.logo { display: flex; align-items: center; gap: 3px; margin-right: 8px; }
.logo-cn, .logo-ai { color: transparent; background-clip: text; -webkit-background-clip: text; }
.logo-cn {
  font-size: 55px;
  line-height: 60px;
  font-weight: 900;
  background-image: linear-gradient(120deg, #566be8 70%, #5a94ee);
}
.logo-ai {
  font: 700 59px/60px Inter, sans-serif;
  background-image: linear-gradient(60deg, #57a6f3 10%, #6673ef 50%, #9668ee);
}

/* Answer card */
.stage { position: relative; flex: 1; min-height: 0; display: flex; }
.card {
  flex: 1;
  min-width: 0;
  margin: 0 41px 0 42px;
  padding: 0 42px;
  background: #fff;
  overflow: hidden;
}
.strip {
  display: grid;
  grid-template-columns: 250fr 361fr 487fr;
  gap: 7px;
  height: 9px;
  align-content: end;
  overflow: hidden;
}
.strip > * { height: 60px; width: 100%; }
.strip-blue { background: #5b8bb5; border-radius: 0 0 0 36px; }
.strip-black { background: #000; }
.strip-chart { border-radius: 0 0 36px 0; }

.sub, .section { margin: 0; line-height: 98px; font-weight: 500; }
.sub, .points { font-family: "Open Sans", "Noto Sans CJK SC", sans-serif; font-size: 56px; }
.sub { display: flex; }
.strip + .sub { margin-top: 32px; }
.num { width: 57px; font-weight: 400; }
.section { margin: 15px 0 27px; font-size: 63px; }

.points {
  display: flex;
  flex-direction: column;
  gap: 13px;
  margin: 7px 0 0;
  padding: 0 0 0 75px;
  list-style: none;
  line-height: 98px;
}
.points b { font-weight: 500; }
.points li::before {
  content: "";
  display: inline-block;
  width: 22px;
  height: 22px;
  margin-right: 36px;
  border-radius: 50%;
  background: #01030f;
  vertical-align: 9px;
}
.ref {
  display: inline-block;
  width: 60px;
  height: 60px;
  margin: 0 13px 0 5px;
  border-radius: 50%;
  background: #f1f2fb;
  color: #565762;
  font-size: 40px;
  line-height: 58px;
  text-align: center;
  vertical-align: 4px;
}

.gallery {
  display: flex;
  flex-direction: column;
  gap: 8px;
  margin-top: 28px;
  border-radius: 36px;
  overflow: hidden;
}
.row { display: grid; gap: 7px; }
.row-a { grid-template-columns: 540fr 565fr; }
.row-b { grid-template-columns: 210fr 463fr 426fr; }
.shot { width: 100%; height: auto; }

/* Chart lettering, in each chart's own units */
.shot-title { font-size: 25px; font-weight: 500; fill: #fff; }
.shot-mark { font-size: 15px; fill: #e8e8e8; }
.strong { font-weight: 700; }
.shot-price { font: 15px Roboto, sans-serif; fill: #333; }
.quote { font-size: 18px; fill: #b5b5b5; }
.q-big { font-size: 40px; font-weight: 700; fill: #e0493c; }
.q-red { fill: #dd4a3d; font-size: 22px; }
.q-row { font-size: 23px; fill: #dcdcdc; }
.q-row .q-red { fill: #dd4a3d; }
.end { text-anchor: end; }
.poster-title { font-size: 136px; font-weight: 900; fill: #c02622; }
.poster-tag { font-size: 83px; font-weight: 700; fill: #b3251c; }
.poster-small { font-size: 17px; fill: #666; }
.poster-body { font-size: 47px; fill: #2a2119; font-weight: 500; }
.scale { font: 34px "Liberation Sans", sans-serif; fill: #9c444b; text-anchor: end; }
.scale-now { font: 34px "Liberation Sans", sans-serif; fill: #d5d5f2; }
.side { font-size: 46px; fill: #c9c9c9; }
.times { font: 36px "Liberation Sans", sans-serif; fill: #c9c9c9; }

.to-bottom {
  position: absolute;
  right: 64px;
  bottom: 42px;
  width: 128px;
  height: 128px;
  display: grid;
  place-items: center;
  border: 1px solid #c6c6ca;
  border-radius: 50%;
  background: #fff;
  box-shadow: 0 4px 120px rgba(20, 24, 50, .16);
}

/* Tools and question box */
.bottom { padding: 27px 0 50px; background: #f5f7fb; position: relative; }
.tools { display: flex; gap: 26px; padding-left: 39px; overflow: hidden; }
.tool {
  flex: none;
  display: flex;
  align-items: center;
  gap: 21px;
  height: 102px;
  padding: 0 34px 0 26px;
  border: 3px solid #dcdde2;
  border-radius: 38px;
  color: #22242f;
  font-family: "Open Sans", "Noto Sans CJK SC", sans-serif;
  font-size: 43px;
  line-height: 60px;
}
.tool-split { padding-left: 21px; font-family: Roboto, sans-serif; }
.divider { width: 3px; height: 46px; margin-left: 4px; background: #dcdde2; }
.ask {
  display: flex;
  align-items: center;
  gap: 58px;
  margin: 35px 0 0;
  padding: 0 60px 0 67px;
}
.field {
  flex: 1;
  min-width: 0;
  display: flex;
  align-items: center;
  height: 149px;
  padding: 0 48px;
  border-radius: 75px;
  background: #fff;
  box-shadow: 0 10px 40px rgba(30, 40, 80, .05);
}
.query {
  flex: 1;
  min-width: 0;
  margin: 0 30px;
  padding: 0;
  border: 0;
  outline: 0;
  background: none;
  color: #01030f;
  font: 49px/72px Roboto, "Noto Sans CJK SC", sans-serif;
}
.query::placeholder { color: #868993; opacity: 1; }
.field .icon-btn:last-child { margin-left: 50px; }
```
